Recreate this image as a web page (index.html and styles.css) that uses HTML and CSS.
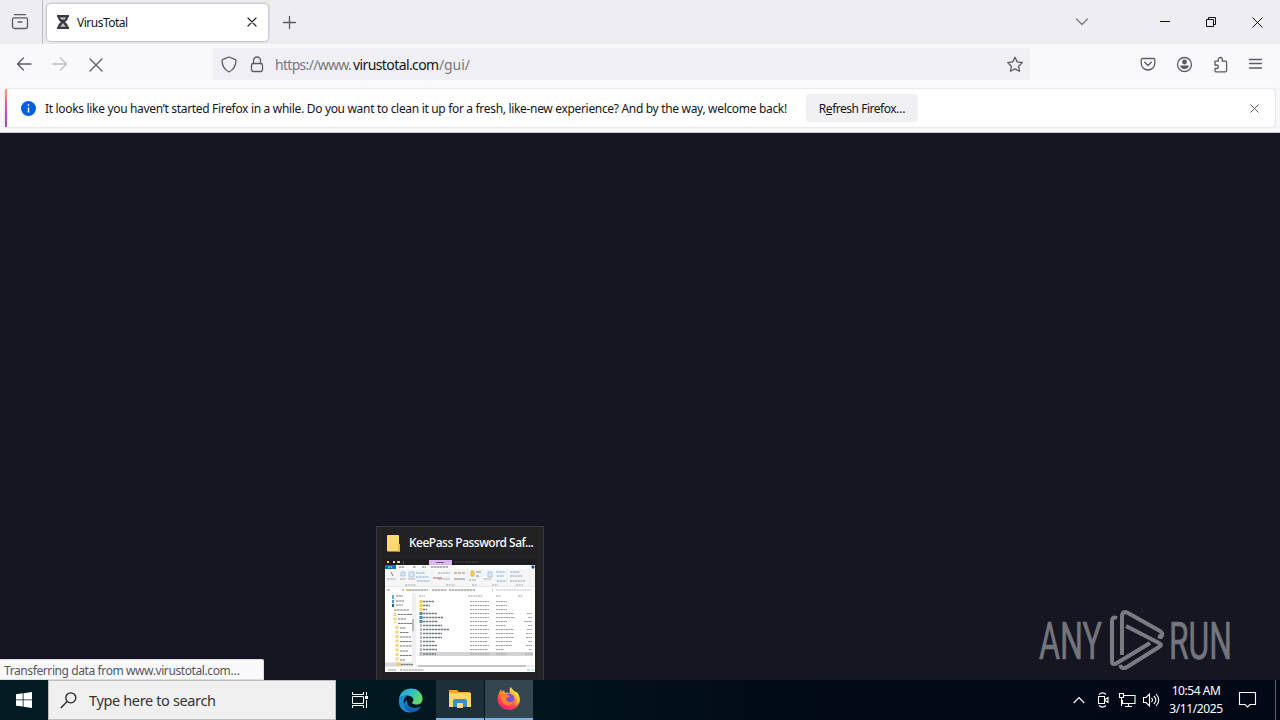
FILE: index.html
```html
<!DOCTYPE html>
<html lang="en">
<head>
<meta charset="utf-8">
<title>VirusTotal</title>
<link rel="stylesheet" href="styles.css">
</head>
<body>
<div class="desktop">
  <header class="tabbar">
    <div class="view"><svg width="18" height="18" viewBox="0 0 18 18" class="ico"><path d="M3.500 1.700h11M3 4.800h12a1.500 1.500 0 0 1 1.500 1.500v7.200a2 2 0 0 1-2 2h-11a2 2 0 0 1-2-2V6.300a1.500 1.500 0 0 1 1.500-1.500zM7 9h4"/></svg></div>
    <div class="tab">
      <svg width="12" height="14" viewBox="0 0 12 14"><path d="M0 0h12v2.200h-1c0 2.500-1.500 3.600-3 4.800 1.500 1.200 3 2.300 3 4.800h1V14H0v-2.200h1C1 9.300 2.500 8.200 4 7 2.500 5.800 1 4.700 1 2.200H0z" fill="#3b3b3f"/><path d="M3 2.500h6L7.800 4.600H4.200zM6 8l2.800 3.700H3.200z" fill="#c6c6ca"/></svg>
      <span class="tab-title">VirusTotal</span>
      <svg width="10" height="10" viewBox="0 0 10 10" class="ico dark"><path d="M1 1l8 8M9 1L1 9"/></svg>
    </div>
    <svg class="ico plus" width="13" height="13" viewBox="0 0 13 13"><path d="M6.500 .5v12M.5 6.500h12"/></svg>
    <div class="win">
      <svg class="ico chev" width="14" height="8" viewBox="0 0 14 8"><path d="M1.500 1L7 6.500 12.500 1"/></svg>
      <svg class="ico black min" width="11" height="11" viewBox="0 0 11 11"><path d="M0 4.500h10"/></svg>
      <svg class="ico black max" width="11" height="11" viewBox="0 0 11 11"><path d="M.5 2.500h7v7h-7zM2.500 2.500v-2h7v7h-2"/></svg>
      <svg class="ico black" width="11" height="11" viewBox="0 0 11 11"><path d="M.5.5l10 10M10.500.5l-10 10"/></svg>
    </div>
  </header>
  <nav class="toolbar">
    <div class="navs">
      <svg class="ico" width="16" height="14" viewBox="0 0 16 14"><path d="M15 7H1.500M7.500 1l-6 6 6 6"/></svg>
      <svg class="ico off" width="16" height="14" viewBox="0 0 16 14"><path d="M1 7h13.500M8.500 1l6 6-6 6"/></svg>
      <svg class="ico stop" width="14" height="14" viewBox="0 0 14 14"><path d="M1 1l12 12M13 1L1 13"/></svg>
    </div>
    <div class="url">
      <svg class="ico" width="16" height="17" viewBox="0 0 16 17"><path d="M8 1l6 2.300q1 .4 1 1.500C14.800 10 13 13.500 8 16 3 13.500 1.200 10 1 4.800q0-1.100 1-1.500z"/></svg>
      <svg class="ico lock" width="14" height="17" viewBox="0 0 14 17"><rect x="1.500" y="7.500" width="11" height="8" rx="1.800"/><path d="M3.500 7.500v-3a3.500 3.500 0 0 1 7 0v3"/></svg>
      <span class="addr"><span class="a1">https://www.</span><span class="a2">virustotal.com</span><span class="a3">/gui/</span></span>
      <svg class="ico star" width="18" height="17" viewBox="0 0 18 17"><path d="M9 1.300l2.200 4.600 5.100.7-3.700 3.600.9 5.100L9 12.900l-4.500 2.400.9-5.100L1.700 6.600l5.100-.7z"/></svg>
    </div>
    <div class="tools">
      <svg class="ico" width="16" height="15" viewBox="0 0 16 15"><path d="M2.500 1.500h11a1.300 1.300 0 0 1 1.300 1.300v3.400a6.800 6.800 0 0 1-13.600 0V2.800a1.300 1.300 0 0 1 1.300-1.300zM4.700 5.300L8 8.500l3.300-3.200"/></svg>
      <svg class="ico" width="17" height="17" viewBox="0 0 17 17"><circle cx="8.500" cy="8.500" r="7"/><circle cx="8.500" cy="6" r="2.400" fill="#5b5b66" stroke="none"/><path d="M4.300 9.500h8.400c.1 2.200-1.600 3.500-4.200 3.500S4.200 11.700 4.300 9.500z" fill="#5b5b66" stroke="none"/></svg>
      <svg class="ico" width="16" height="17" viewBox="0 0 16 17"><path d="M2 7V5.200h3.300V3.500a2 2 0 0 1 4 0v1.700h3a1.300 1.300 0 0 1 1.300 1.300v8a1.300 1.300 0 0 1-1.300 1.300H3.300A1.300 1.300 0 0 1 2 14.500v-2h1.600a1.700 1.700 0 0 0 0-3.500H2z"/></svg>
      <svg class="ico" width="13" height="11" viewBox="0 0 13 11"><path d="M.5 .5h12M.5 4.500h12M.5 9h12"/></svg>
    </div>
  </nav>
  <section class="notice-wrap">
    <div class="notice">
      <svg width="15" height="15" viewBox="0 0 15 15"><circle cx="7.500" cy="7.500" r="7.500" fill="#0060df"/><path d="M7.500 3.200v1.500M7.500 6.500v5" stroke="#fff" stroke-width="1.500"/></svg>
      <span class="message">It looks like you haven’t started Firefox in a while. Do you want to clean it up for a fresh, like-new experience? And by the way, welcome back!</span>
      <button class="refresh"><span>R<u>e</u>fresh Firefox…</span></button>
      <svg class="ico dismiss" width="9" height="9" viewBox="0 0 9 9"><path d="M.7.7l7.600 7.600M8.300.7L.7 8.300"/></svg>
    </div>
  </section>
  <main class="page">
    <div class="status"><span>Transferring data from www.virustotal.com…</span></div>
    <div class="preview">
      <div class="preview-head">
        <svg width="14" height="17" viewBox="0 0 14 17"><path d="M0 1q0-1 1-1h10q1 0 1 1v8l1 1v6.500H1q-1 0-1-1z" fill="#fbd96f"/><path d="M11 9h2v7.500h-2z" fill="#e9b83c"/></svg>
        <span>KeePass Password Saf...</span>
      </div>
      <svg class="thumb" width="150" height="113" viewBox="0 0 150 113">
        <path d="M0 0h150v6H0z" fill="#1d1d20"/>
        <path d="M0 6h150v107H0z" fill="#fff"/>
        <path d="M2 2h2v2H2z" fill="#f4d774"/><path d="M8 2h2v2H8z" fill="#ddd"/><path d="M12 2h3v2h-3z" fill="#f1d66c"/><path d="M18 2h1v3h-1z" fill="#555"/>
        <path d="M44 1h23v5H44z" fill="#dcb6ee"/><path d="M51 3.500h8" stroke="#78598b"/><path d="M69 3h25" stroke="#4b4b4f" stroke-dasharray="3 .6"/>
        <path d="M0 6h11v4H0z" fill="#1670b8"/><path d="M3 8h4" stroke="#9fc9ec"/>
        <path d="M14 8h5M28 8h3M37 8h4M46 8h17" stroke="#666" stroke-dasharray="2.500 .5"/>
        <path d="M0 10h150v17H0z" fill="#f5f6f7"/><circle cx="148" cy="8" r="1.700" fill="#174f92"/>
        <g fill="none" stroke-width="1">
          <path d="M6 13l2 4M48 19h9" stroke="#b0656d"/>
          <path d="M16 13h4v4h-4zM24 13h5v5h-5zM103 13h4v5h-4z" fill="#dce8f3" stroke="#a9c6e0"/>
          <path d="M86 12h3v5h-3z" fill="#f5ce68" stroke="#e7b94a"/>
          <path d="M31 14h9M31 18h13M32 22h13M111 13h9M112 17h7M125 13h10M112 22h9" stroke="#82abd0" stroke-dasharray="2.500 .6"/>
          <path d="M53 14h12M53 20h12M125 17h13M125 22h15" stroke="#9a9da1" stroke-dasharray="2 .6"/>
          <path d="M69 14h12M69 20h4" stroke="#be6e63" stroke-dasharray="3 1"/>
          <path d="M72 20h8M91 13h5M91 17h3" stroke="#788da0"/>
          <path d="M2 20h9M15 20h6M23 20h7M84 21h7M99 20h8M20 26h11M61 26h9M87 26h5M107 26h6M131 26h7" stroke="#a0a3a7" stroke-dasharray="2 .7"/>
          <path d="M47 10v16M82 10v16M97 10v16M122 10v16M145 10v16" stroke="#e1e2e4" stroke-width=".5"/>
        </g>
        <path d="M0 27.500h150" stroke="#d4d8dc" stroke-width=".6"/>
        <path d="M2 31h3M17 31h2M107 31h1" stroke="#8d8d8d"/><path d="M21 31h3" stroke="#edc65a" stroke-width="2"/>
        <path d="M24 31h19M47 31h15M64 31h26" stroke="#777" stroke-dasharray="2.500 .5"/><path d="M111 31h35" stroke="#bbb" stroke-dasharray="2 .6"/>
        <path d="M34 37h6M83 37h15M111 37h5M133 37h5" stroke="#9ba4b0" stroke-dasharray="2 .5"/>
        <path d="M30 34v72" stroke="#e2e2e2"/><path d="M28 34v69" stroke="#eee" stroke-width="2"/><path d="M28 60v12" stroke="#bbb" stroke-width="2"/>
        <path d="M8 36v4" stroke="#67a5d4" stroke-width="2"/><path d="M8 41v3" stroke="#4a97ce" stroke-width="2"/><path d="M8 45v3" stroke="#335b82" stroke-width="2"/>
        <path d="M11 37h7M11 42h8M11 46h7M9 51h15" stroke="#747474" stroke-dasharray="2.500 .6"/>
        <path d="M10 54v10M12 67v37" stroke="#f3d37b" stroke-width="3" stroke-dasharray="3 1.500"/>
        <path d="M13 55.500h14M13 60h8M13 64.500h14M15 69h6M15 73.500h9M15 78h11M15 82.500h12M15 87h12M15 92h8M15 96.500h12M15 101h5" stroke="#777" stroke-dasharray="2.500 .5"/>
        <path d="M0 103.500h28v4H0z" fill="#d9d9d9"/><path d="M12 105.500h4" stroke="#efcc65" stroke-width="3"/><path d="M16 105.500h12" stroke="#777" stroke-dasharray="2 .5"/>
        <path d="M34 93h114v4H34z" fill="#d3d3d3"/>
        <path d="M36 41v11" stroke="#f3ca58" stroke-width="3" stroke-dasharray="3 1"/>
        <path d="M36 53v11" stroke="#4c8999" stroke-width="3" stroke-dasharray="3 1"/>
        <path d="M36 65v31" stroke="#b8bbbd" stroke-width="2" stroke-dasharray="3 1"/>
        <path d="M38 42.500h11M38 46.500h7M38 50.500h4M38 54.500h14M38 58.500h20M38 62.500h15M38 66.500h19M38 70.500h26M38 74.500h19M38 78.500h19M38 82.500h12M38 86.500h14M38 90.500h14M38 95h13" stroke="#757a80" stroke-width="1.300" stroke-dasharray="2.500 .5"/>
        <g stroke="#a1a1a1" stroke-width="1.200" stroke-dasharray="2 .5"><path d="M85 42.500h19M85 46.500h19M85 50.500h19M85 54.500h19M85 58.500h19M85 62.500h18M85 66.500h17M85 70.500h19M85 74.500h18M85 78.500h19M85 82.500h17M85 86.500h19M85 90.500h18M85 95h19"/><path d="M111 42.500h11M111 46.500h11M111 50.500h11M111 54.500h18M111 58.500h19M111 62.500h11M111 66.500h10M111 70.500h18M111 74.500h18M111 78.500h18M111 82.500h16M111 86.500h16M111 90.500h8M111 95h11"/><path d="M142 54.500h5M143 58.500h4M139 62.500h8M143 66.500h4M142 70.500h5M141 74.500h6M141 78.500h6M143 82.500h4M141 86.500h6M144 90.500h3M140 95h8"/></g>
        <path d="M31 107h119" stroke="#eee" stroke-width="2"/><path d="M33 107h108" stroke="#c4c4c4" stroke-width="2"/>
        <path d="M3 111h8M15 111h24" stroke="#929292" stroke-dasharray="2.500 .5"/><path d="M142 111h3M147 111h2" stroke="#78b9de"/>
      </svg>
    </div>
    <svg class="watermark" width="200" height="70" viewBox="0 0 200 70">
      <g class="wm-text"><text x="0" y="50" textLength="63" lengthAdjust="spacingAndGlyphs">ANY</text><text x="130" y="50" textLength="63" lengthAdjust="spacingAndGlyphs">RUN</text></g>
      <g fill="none" stroke="#7b7c83" stroke-width="4" stroke-linejoin="round"><path d="M78 9Q73 7 73 12v40q0 5 5 2L111 34"/><path d="M83 46V8q0-7 6-4l32 18q4 3 1 6l-3-1"/><path d="M87 17l33 17q4 2 0 4L88 58q-5 3-7-2"/></g>
    </svg>
  </main>
  <footer class="taskbar">
    <div class="start"><svg width="16" height="16" viewBox="0 0 16 16"><path fill="#fff" d="M0 2.200L6.700 1.300V7.500H0zM7.500 1.200L16 0v7.500H7.500zM0 8.300h6.700v6.300L0 13.700zM7.500 8.300H16V16l-8.500-1.200z"/></svg></div>
    <div class="search"><svg width="17" height="17" viewBox="0 0 17 17" fill="none" stroke="#222" stroke-width="1.300"><circle cx="10.800" cy="5.800" r="5"/><path d="M7.300 9.400L.8 16"/></svg><span>Type here to search</span></div>
    <div class="app"><svg width="17" height="16" viewBox="0 0 17 16" fill="none" stroke="#fff"><path d="M.5 0v2.500h11V0M.5 4.500h11v7H.5zM.5 16v-2.500h11V16M14.500 0v3.500M14.500 8v8"/><path d="M13 4h3v3h-3z" fill="#fff" stroke="none"/></svg></div>
    <div class="app edge"><svg width="25" height="25" viewBox="0 0 25 25"><defs><linearGradient id="e1" x2="1" y2=".5"><stop stop-color="#249bdd"/><stop offset=".55" stop-color="#31c1c4"/><stop offset="1" stop-color="#62dc68"/></linearGradient><linearGradient id="e2" x2="0" y2="1"><stop stop-color="#1686ce"/><stop offset="1" stop-color="#135ca9"/></linearGradient></defs><path d="M1 11C2 4 7 .5 13 .5c7 0 11.500 5 11.500 10 0 4-2.500 6-6 6-3 0-5-1-4-2.500 3-3-1-6.500-5-6.500-4 0-7 1.500-8.500 3.500z" fill="url(#e1)"/><path d="M1 11C3 8 6 7.200 9 7.500c-3 2-4 5-3 9 1 4 5 7.300 9 7.500C7 26-.5 20 1 11z" fill="#1b8bd3"/><path d="M9 12c-1 5 4 10 12.500 7 .9-.4 1.200.1.700.8C20 23 16.500 24.500 13.500 24 7 23.500 3 16 9 12z" fill="url(#e2)"/></svg></div>
    <div class="app open"><svg width="22" height="20" viewBox="0 0 22 20"><path d="M0 1h8l2 2h11v5H0z" fill="#f1a624"/><path d="M0 4h22v14H0z" fill="#fed66b"/><path d="M4 18v-6q0-2 2-2h10q2 0 2 2v6h-4v-4H8v4z" fill="#368fc8"/><path d="M8 14h6v5H8z" fill="#fbd975"/></svg></div>
    <div class="app open active"><svg width="24" height="24" viewBox="0 0 24 24"><defs><linearGradient id="f1" x1=".8" x2=".25" y2="1"><stop stop-color="#fff34a"/><stop offset=".4" stop-color="#ff9e28"/><stop offset=".7" stop-color="#ff4350"/><stop offset="1" stop-color="#e61d79"/></linearGradient></defs><path d="M2 6l2-4 1 3 2-2 1 3c2-.8 3-.5 5 0-1-3 0-5 1-6 1 3 4 4 5 6l1-1c3 5 4 8 2 12-2 4-6 6-10 6C5 23-1 17 1 9z" fill="url(#f1)"/><circle cx="12" cy="12" r="5.500" fill="#8050dc"/><path d="M5 8c4-2 7 0 8 2-2-.2-3 .6-4 2 1 4 6 4 8 1-1 5-6 7-10 4-3-2-4-5-2-9z" fill="#ff812a"/><path d="M14 1c1 4 5 6 6 10 1 3-1 6-2 7 5-2 5-7 3-11l-2-2c-2-1-4-2-5-4z" fill="#ffd938"/></svg></div>
    <div class="tray">
      <svg class="t up" width="12" height="8" viewBox="0 0 12 8"><path d="M.7 7L6 1.500 11.300 7"/></svg>
      <svg class="t cam" width="12" height="16" viewBox="0 0 12 16"><path d="M2 2.500Q5.500-.8 9 2.500M2 13.500q3.500 3.300 7 0M1.500 4.500h6v7h-6zM8 7.500l3-2v5l-3-2"/></svg>
      <svg class="t net" width="17" height="14" viewBox="0 0 17 14"><path d="M5 2.500h11v8H3.500V7M.5.5h4v4h-4zM2.500 4.500V13M9.500 10.500v3M6 13.500h7"/></svg>
      <svg class="t vol" width="17" height="14" viewBox="0 0 17 14"><path d="M.5 4.500H3L6.500 1v12L3 9.500H.5zM8.500 5q2 2 0 4M10.800 3q4 4 0 8M13 1q5.500 6 0 12"/></svg>
      <div class="clock"><span class="c1">10:54 AM</span><span class="c2">3/11/2025</span></div>
      <svg class="t note" width="17" height="16" viewBox="0 0 17 16"><path d="M.5.5h16v12H11L8.500 15 6 12.500H.5z"/></svg>
      <div class="peek"></div>
    </div>
  </footer>
</div>
</body>
</html>
```
FILE: styles.css
```css
* { box-sizing: border-box; }
body { margin: 0; overflow: hidden; font-family: "Noto Sans", "Open Sans", sans-serif; font-size: 12px; color: #15141a; }
svg { display: block; flex: none; overflow: visible; }
span { white-space: nowrap; }
.desktop { width: 1280px; height: 720px; display: flex; flex-direction: column; }
.ico { fill: none; stroke: #5b5b66; stroke-width: 1.3; stroke-linecap: round; stroke-linejoin: round; }
.dark { stroke: #303037; }
.black { stroke: #111; stroke-width: 1; stroke-linecap: butt; stroke-linejoin: miter; }
.off { stroke: #bebec3; }
.tabbar { height: 44px; background: #eeedf2; display: flex; align-items: center; }
.view { width: 43px; height: 44px; border-right: 1px solid #bbbac2; padding: 13px 0 0 11px; }
.tab { width: 221px; height: 37px; margin-left: 4px; border-radius: 4px; background: #fff; box-shadow: 0 0 3px rgba(0,0,0,.4); display: flex; align-items: center; padding: 0 11px 0 10px; }
.tab-title { margin-left: 8px; flex: 1; font-size: 12px; letter-spacing: -.5px; }
.plus { margin-left: 15px; }
.win { display: flex; align-items: center; margin-left: auto; padding-right: 17px; }
.chev { margin-right: 71px; stroke: #777780; }
.min, .max { margin-right: 35px; }
.toolbar { height: 44px; background: #f9f9fb; display: flex; align-items: center; padding-bottom: 4px; }
.navs { width: 213px; display: flex; gap: 20px; padding-left: 16px; align-items: center; }
.stop { margin: 2px 0 0 1px; }
.url { width: 817px; height: 32px; background: #f0f0f4; border-radius: 3px; display: flex; align-items: center; padding: 0 6px 0 8px; }
.lock { margin-left: 13px; }
.addr { margin-left: 11px; display: flex; font-size: 14px; color: #77777f; flex: 1; }
.a1 { width: 78px; letter-spacing: -.7px; }
.a2 { width: 86px; letter-spacing: -.6px; color: #15141a; }
.a3 { letter-spacing: -.1px; }
.tools { flex: 1; display: flex; align-items: center; justify-content: space-between; padding: 0 18px 0 110px; }
.notice-wrap { height: 45px; background: #f8f8fb; padding: 1px 5px 5px; border-bottom: 1px solid #c9c9d7; }
.notice { height: 38px; background: #fff; border-radius: 4px; display: flex; align-items: center; box-shadow: 0 0 2px #bcbcc4; padding: 0 16px 0 14px; border-left: 2px solid; border-image: linear-gradient(#ffa36c, #d850a5, #8a52c8) 1; }
.message { width: 745px; margin-left: 9px; letter-spacing: -.322px; }
.refresh { width: 112px; height: 28px; margin-left: 16px; padding: 0; border: 0; border-radius: 4px; background: #f0f0f3; font: inherit; letter-spacing: -.48px; color: #15141a; }
.dismiss { margin-left: auto; stroke-width: 1; }
.page { position: relative; flex: 1; background: #151621; }
.status { position: absolute; left: 0; bottom: 0; width: 264px; height: 21px; padding: 3px 0 0 4px; background: #f9f9fb; border: 1px solid #ddd; border-left: 0; border-radius: 0 2px 0 0; color: #55555e; line-height: 16px; letter-spacing: -.4px; }
.preview { position: absolute; left: 376px; bottom: 0; width: 168px; height: 154px; background: #222225; border: 1px solid #343943; border-bottom: 0; padding: 0 8px; }
.preview-head { height: 32px; display: flex; align-items: center; gap: 8px; padding-left: 2px; color: #fff; font-weight: 500; letter-spacing: -.5px; }
.preview-head span { margin-top: -2px; }
.watermark { position: absolute; left: 1039px; top: 476px; }
.wm-text text { font: 51px "Roboto", sans-serif; fill: #74757c; stroke: #74757c; stroke-width: .7; }
.taskbar { height: 40px; display: flex; background: linear-gradient(90deg, #021b22, #021a22 25%, #01141d 42%, #020b18 60%, #030816); }
.start { width: 48px; display: flex; align-items: center; justify-content: center; }
.search { width: 288px; background: #f0f0f0; border: 1px solid #bcbcbc; display: flex; align-items: center; padding-left: 11px; gap: 12px; color: #333; font-size: 14.5px; letter-spacing: -.36px; }
.app { width: 48px; display: flex; align-items: center; justify-content: center; }
.edge { width: 52px; padding-left: 0; }
.open { background: #1d3039; border-bottom: 2px solid #75b6ed; }
.active { margin-left: 1px; background: #34464e; }
.tray { flex: 1; display: flex; align-items: center; justify-content: flex-end; color: #fff; }
.t { fill: none; stroke: #fff; stroke-width: 1.1; }
.up { margin-right: -1px; }
.cam { margin-left: 13px; }
.net { margin-left: 10px; }
.vol { margin-left: 7px; }
.clock { width: 79px; display: flex; flex-direction: column; align-items: center; line-height: 18px; font-size: 12px; letter-spacing: -.4px; padding-right: 7px; }
.c1 { letter-spacing: -.45px; }
.peek { width: 5px; height: 40px; margin-left: 19px; border-left: 1px solid #60636a; }
```
